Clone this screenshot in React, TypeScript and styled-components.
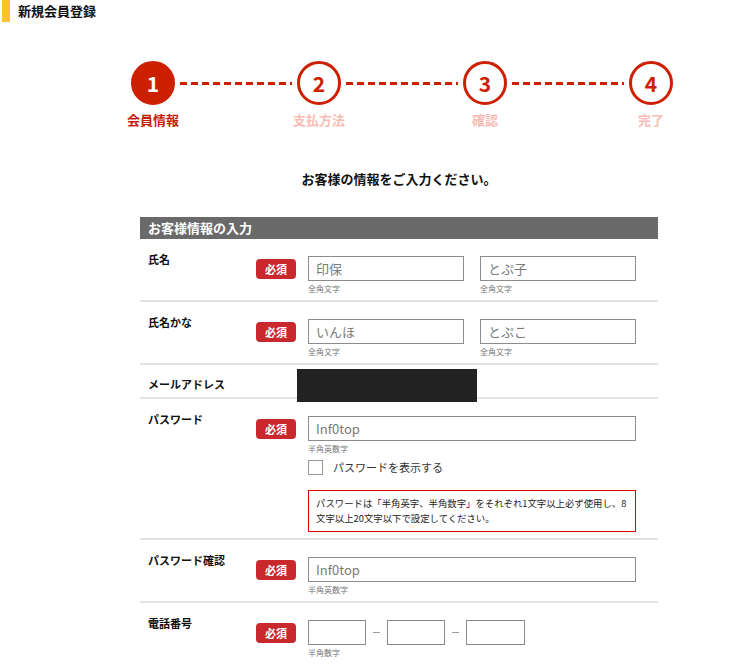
import styled, { createGlobalStyle } from 'styled-components';

const GlobalStyle = createGlobalStyle`
  body {
    margin: 0;
    background: #fff;
    color: #222;
    font-family: "Noto Sans CJK JP", "Noto Sans", sans-serif;
  }
  * {
    box-sizing: border-box;
  }
`;

const PageHeader = styled.div`
  display: flex;
  align-items: center;
  gap: 8px;
  height: 22px;
  padding-left: 2px;
`;

const YellowBar = styled.span`
  width: 8px;
  height: 22px;
  background: #fbc52a;
`;

const PageTitle = styled.h1`
  margin: 0;
  font-size: 13px;
  line-height: 22px;
  font-weight: 700;
  color: #111;
`;

const Stepper = styled.div`
  display: flex;
  width: 542px;
  margin: 39px 0 0 131px;
`;

const Step = styled.div`
  display: flex;
  flex-direction: column;
  align-items: center;
  width: 44px;
  flex: none;
`;

const Circle = styled.div<{ $active?: boolean }>`
  display: flex;
  align-items: center;
  justify-content: center;
  width: 44px;
  height: 44px;
  border-radius: 50%;
  border: 3px solid #cc2000;
  background: ${(p) => (p.$active ? '#cc2000' : '#fff')};
  color: ${(p) => (p.$active ? '#fff' : '#cc2000')};
  font-size: 21px;
  font-weight: 700;
  line-height: 1;
`;

const StepLabel = styled.div<{ $active?: boolean }>`
  margin-top: 7px;
  white-space: nowrap;
  font-size: 13px;
  line-height: 16px;
  font-weight: 700;
  color: ${(p) => (p.$active ? '#c41d0a' : '#f8bcb4')};
`;

const Connector = styled.div`
  flex: 1;
  height: 3px;
  margin: 21px 5px 0;
  background: repeating-linear-gradient(
    to right,
    #cc2000 0 7px,
    transparent 7px 11px
  );
`;

const Main = styled.div`
  width: 518px;
  margin-left: 140px;
`;

const Lead = styled.p`
  margin: 42px 0 29px;
  text-align: center;
  font-size: 13px;
  line-height: 18px;
  font-weight: 700;
  color: #111;
`;

const SectionHeader = styled.h2`
  margin: 0;
  height: 22px;
  padding-left: 8px;
  background: #6a6a6a;
  color: #fff;
  font-size: 13px;
  line-height: 22px;
  font-weight: 700;
`;

const Row = styled.div<{ $compact?: boolean }>`
  display: grid;
  grid-template-columns: 108px 52px 1fr;
  padding: ${(p) => (p.$compact ? '4px 22px 0 8px' : '12px 22px 6px 8px')};
  border-bottom: 2px solid #e3e3e3;

  &:last-child {
    border-bottom: none;
  }
`;

const Label = styled.div<{ $offset?: number }>`
  margin-top: ${(p) => p.$offset ?? 0}px;
  font-size: 11px;
  line-height: 16px;
  font-weight: 700;
  color: #111;
`;

const Badge = styled.span`
  align-self: start;
  display: flex;
  align-items: center;
  justify-content: center;
  width: 40px;
  height: 20px;
  margin-top: 8px;
  border-radius: 4px;
  background: #c9282d;
  color: #fff;
  font-size: 11px;
  font-weight: 700;
  line-height: 1;
`;

const Field = styled.div`
  display: flex;
  flex-direction: column;
  padding-top: 5px;
`;

const Pair = styled.div`
  display: flex;
  gap: 16px;
`;

const FieldGroup = styled.div`
  display: flex;
  flex-direction: column;
`;

const TextInput = styled.input<{ $width?: number }>`
  width: ${(p) => (p.$width ? `${p.$width}px` : '100%')};
  height: 25px;
  padding: 0 7px;
  border: 1px solid #8c8c8c;
  border-radius: 0;
  background: #fff;
  font-family: inherit;
  font-size: 13px;
  color: #333;
  outline: none;

  &::placeholder {
    color: #7a7a7a;
  }
`;

const Hint = styled.div`
  margin-top: 3px;
  font-size: 8px;
  line-height: 10px;
  color: #777;
`;

const Masked = styled.div`
  grid-column: 2 / 4;
  width: 180px;
  height: 33px;
  margin: 0 0 -5px 41px;
  background: #222;
`;

const CheckRow = styled.label`
  display: flex;
  align-items: center;
  gap: 10px;
  margin-top: 6px;
  font-size: 11px;
  line-height: 15px;
  color: #333;
`;

const CheckBox = styled.input`
  appearance: none;
  width: 15px;
  height: 15px;
  margin: 0;
  border: 1px solid #999;
  background: #fff;
`;

const Notice = styled.div`
  margin-top: 15px;
  padding: 5px 7px;
  border: 1px solid #d40000;
  font-size: 9.4px;
  line-height: 15px;
  color: #222;
`;

const PhoneRow = styled.div`
  display: flex;
  align-items: center;
`;

const Dash = styled.span`
  width: 7px;
  height: 1px;
  margin: 0 7px;
  background: #999;
`;

const steps = ['会員情報', '支払方法', '確認', '完了'];

function App() {
  return (
    <>
      <GlobalStyle />
      <PageHeader>
        <YellowBar />
        <PageTitle>新規会員登録</PageTitle>
      </PageHeader>

      <Stepper>
        {steps.map((s, i) => (
          <>
            {i > 0 && <Connector key={`c${i}`} />}
            <Step key={s}>
              <Circle $active={i === 0}>{i + 1}</Circle>
              <StepLabel $active={i === 0}>{s}</StepLabel>
            </Step>
          </>
        ))}
      </Stepper>

      <Main>
        <Lead>お客様の情報をご入力ください。</Lead>
        <SectionHeader>お客様情報の入力</SectionHeader>

        <Row>
          <Label>氏名</Label>
          <Badge>必須</Badge>
          <Field>
            <Pair>
              <FieldGroup>
                <TextInput $width={156} placeholder="印保" />
                <Hint>全角文字</Hint>
              </FieldGroup>
              <FieldGroup>
                <TextInput $width={156} placeholder="とぷ子" />
                <Hint>全角文字</Hint>
              </FieldGroup>
            </Pair>
          </Field>
        </Row>

        <Row>
          <Label>氏名かな</Label>
          <Badge>必須</Badge>
          <Field>
            <Pair>
              <FieldGroup>
                <TextInput $width={156} placeholder="いんほ" />
                <Hint>全角文字</Hint>
              </FieldGroup>
              <FieldGroup>
                <TextInput $width={156} placeholder="とぷこ" />
                <Hint>全角文字</Hint>
              </FieldGroup>
            </Pair>
          </Field>
        </Row>

        <Row $compact>
          <Label $offset={7}>メールアドレス</Label>
          <Masked />
        </Row>

        <Row>
          <Label>パスワード</Label>
          <Badge>必須</Badge>
          <Field>
            <TextInput type="password" placeholder="Inf0top" />
            <Hint>半角英数字</Hint>
            <CheckRow>
              <CheckBox type="checkbox" />
              パスワードを表示する
            </CheckRow>
            <Notice>
              パスワードは「半角英字、半角数字」をそれぞれ1文字以上必ず使用し、8文字以上20文字以下で設定してください。
            </Notice>
          </Field>
        </Row>

        <Row>
          <Label>パスワード確認</Label>
          <Badge>必須</Badge>
          <Field>
            <TextInput type="password" placeholder="Inf0top" />
            <Hint>半角英数字</Hint>
          </Field>
        </Row>

        <Row>
          <Label>電話番号</Label>
          <Badge>必須</Badge>
          <Field>
            <PhoneRow>
              <TextInput $width={58} />
              <Dash />
              <TextInput $width={58} />
              <Dash />
              <TextInput $width={59} />
            </PhoneRow>
            <Hint>半角数字</Hint>
          </Field>
        </Row>
      </Main>
    </>
  );
}

export default App;
